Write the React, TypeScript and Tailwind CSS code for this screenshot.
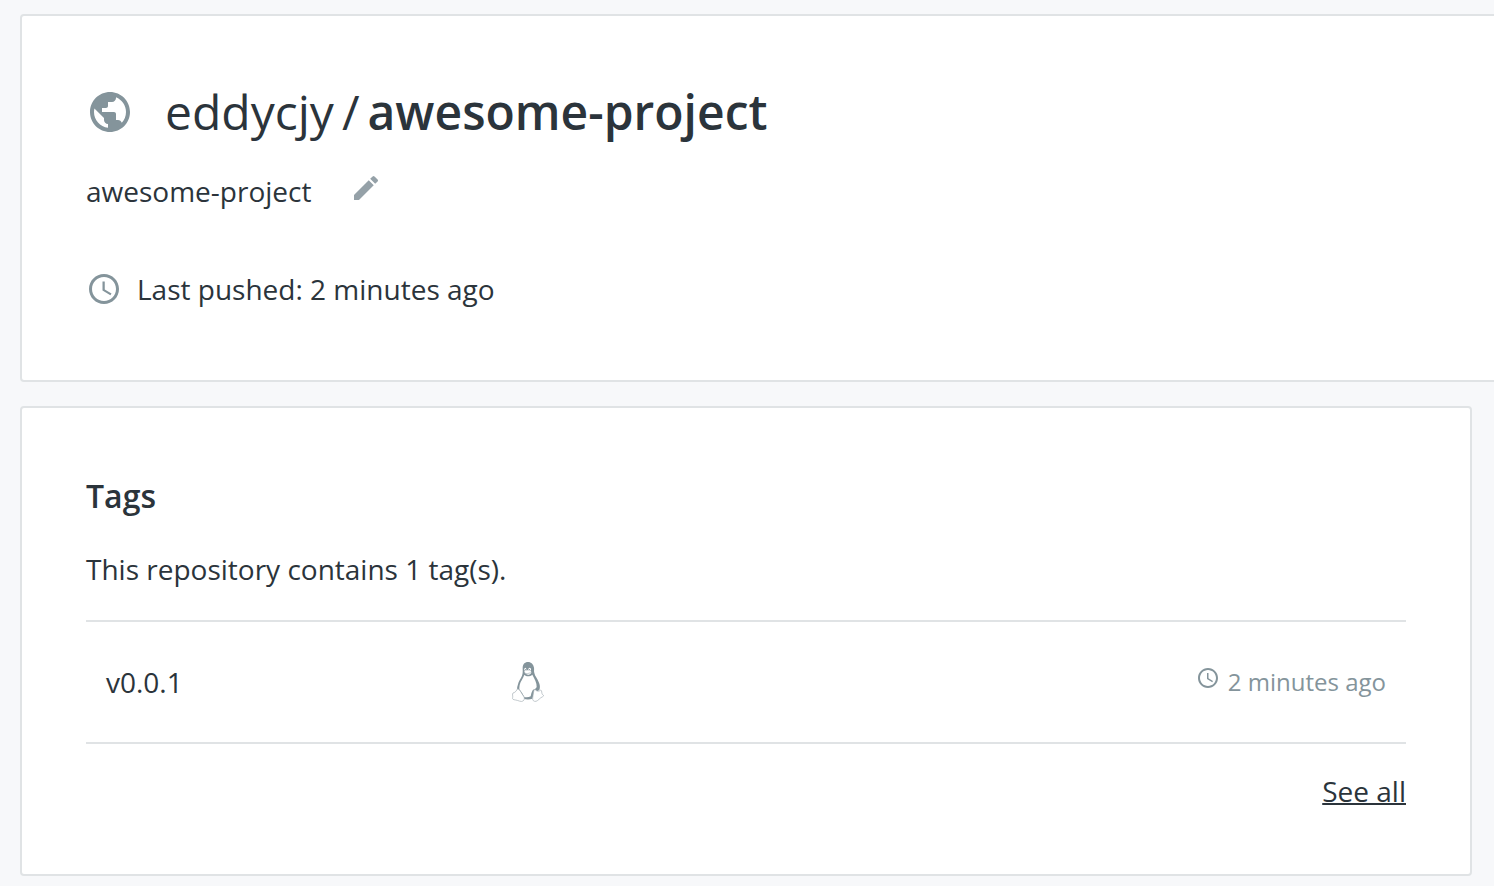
import React from "react";

type IconProps = { className?: string };

function GlobeIcon({ className }: IconProps) {
  return (
    <svg viewBox="0 0 24 24" fill="currentColor" className={className} aria-hidden="true">
      <path d="M12 2C6.48 2 2 6.48 2 12s4.48 10 10 10 10-4.48 10-10S17.52 2 12 2zm-1 17.93c-3.95-.49-7-3.85-7-7.93 0-.62.08-1.21.21-1.79L9 15v1c0 1.1.9 2 2 2v1.93zm6.9-2.54c-.26-.81-1-1.39-1.9-1.39h-1v-3c0-.55-.45-1-1-1H8v-2h2c.55 0 1-.45 1-1V7h2c1.1 0 2-.9 2-2v-.41c2.93 1.19 5 4.06 5 7.41 0 2.08-.8 3.97-2.1 5.39z" />
    </svg>
  );
}

function PencilIcon({ className }: IconProps) {
  return (
    <svg viewBox="0 0 24 24" fill="currentColor" className={className} aria-hidden="true">
      <path d="M3 17.25V21h3.75L17.81 9.94l-3.75-3.75L3 17.25zM20.71 7.04a.996.996 0 0 0 0-1.41l-2.34-2.34a.996.996 0 0 0-1.41 0l-1.83 1.83 3.75 3.75 1.83-1.83z" />
    </svg>
  );
}

function ClockIcon({ className }: IconProps) {
  return (
    <svg viewBox="0 0 24 24" fill="currentColor" className={className} aria-hidden="true">
      <path d="M11.99 2C6.47 2 2 6.48 2 12s4.47 10 9.99 10C17.52 22 22 17.52 22 12S17.52 2 11.99 2zM12 20c-4.42 0-8-3.58-8-8s3.58-8 8-8 8 3.58 8 8-3.58 8-8 8z" />
      <path d="M12.5 7H11v6l5.25 3.15.75-1.23-4.5-2.67z" />
    </svg>
  );
}

function LinuxIcon({ className }: IconProps) {
  return (
    <svg viewBox="24 30 120 132" className={className} role="img" aria-label="Linux">
      <path
        fill="#84949b"
        d="M84 36c-10 0-16 7-16 18 0 9 1 15-2 23-4 9-10 16-12 26-2 6-3 11-3 17l20 26c7 3 18 3 26 0l6-18 15-8c3-8 2-16-2-24-3-9-11-17-13-27-2-7 0-11-1-16-2-10-8-17-18-17z"
      />
      <path
        fill="#fff"
        d="M73 74c-2 9-12 20-14 31-1 5-1 9-1 13 6 7 10 14 15 23 6 2 14 1 19-2 1-7 3-13 6-18 3-4 10-4 12-10 1-13-7-25-13-37-7 6-17 7-24 1z"
      />
      <path fill="#fff" d="M73 64c4-4 15-4 20 0 3 4-1 8-6 10-6 1-13-3-14-10z" />
      <path fill="none" stroke="#a3afb5" strokeWidth="2" d="M74 69c5 3 13 2 18-2" />
      <ellipse cx="76" cy="58" rx="3" ry="5" fill="#fff" />
      <ellipse cx="89" cy="58" rx="4" ry="5" fill="#fff" />
      <circle cx="77" cy="59" r="2" fill="#84949b" />
      <circle cx="88" cy="59" r="2" fill="#84949b" />
      <g fill="#fff" stroke="#a3adb3" strokeWidth="2" strokeLinejoin="round">
        <path d="M53 116c-4 5-5 11-14 13-3 4 0 8-1 13-2 6 2 7 9 8 8 1 16 7 22 3 5-3 5-9 2-14-6-8-11-21-18-23z" />
        <path d="M104 117c-4 6-4 17-6 27-1 7 3 11 10 10 7-2 11-10 20-14 4-2 3-5-1-7-3-4 0-10-5-13-6 6-13 4-18-3z" />
      </g>
      <circle cx="113" cy="118" r="3" fill="#84949b" />
    </svg>
  );
}

type Tag = { name: string; pushed: string };

const tags: Tag[] = [{ name: "v0.0.1", pushed: "2 minutes ago" }];

function RepositoryHeader() {
  return (
    <header className="-mr-12 rounded-[4px] border-2 border-[#e0e3e5] bg-white px-16 pt-16 pb-[72px]">
      <div className="flex items-center gap-[31px]">
        <GlobeIcon className="size-12 shrink-0 text-[#84949b]" />
        <h1 className="flex gap-2 text-[48px] leading-[64px] font-normal">
          <span>eddycjy</span>
          <span>/</span>
          <span className="font-semibold">awesome-project</span>
        </h1>
      </div>
      <div className="mt-7 flex items-start gap-[39px] leading-[38px]">
        <p>awesome-project</p>
        <button type="button" aria-label="Edit description" className="text-[#95a1a8]">
          <PencilIcon className="size-8" />
        </button>
      </div>
      <div className="mt-[60px] flex items-center gap-[15px] leading-[38px]">
        <ClockIcon className="size-9 text-[#84949b]" />
        <p>Last pushed: 2 minutes ago</p>
      </div>
    </header>
  );
}

function TagsPanel() {
  return (
    <section className="rounded-[4px] border-2 border-[#e0e3e5] bg-white px-16 py-16">
      <h2 className="text-[32px] leading-[48px] font-semibold">Tags</h2>
      <p className="mt-[29px]">This repository contains 1 tag(s).</p>
      <table className="mt-[31px] w-full border-t-2 border-[#e0e3e5]">
        <tbody>
          {tags.map((tag) => (
            <tr key={tag.name} className="h-[122px] border-b-2 border-[#e0e3e5]">
              <td className="w-[32%] pl-5">{tag.name}</td>
              <td>
                <LinuxIcon className="h-11 w-10" />
              </td>
              <td className="pr-5 text-[24px] text-[#84949b]">
                <div className="flex items-start justify-end gap-2 leading-8">
                  <ClockIcon className="size-6" />
                  <span>{tag.pushed}</span>
                </div>
              </td>
            </tr>
          ))}
        </tbody>
      </table>
      <div className="mt-7 flex justify-end leading-[38px]">
        <a href="#tags" className="underline decoration-2">
          See all
        </a>
      </div>
    </section>
  );
}

export default function App() {
  return (
    <main className="flex min-h-screen flex-col gap-6 overflow-hidden bg-[#f7f8fa] pt-[14px] pr-[22px] pb-[10px] pl-5 font-['Open_Sans','Noto_Sans',sans-serif] text-[28px] leading-[40px] text-[#2b343b]">
      <RepositoryHeader />
      <TagsPanel />
    </main>
  );
}
